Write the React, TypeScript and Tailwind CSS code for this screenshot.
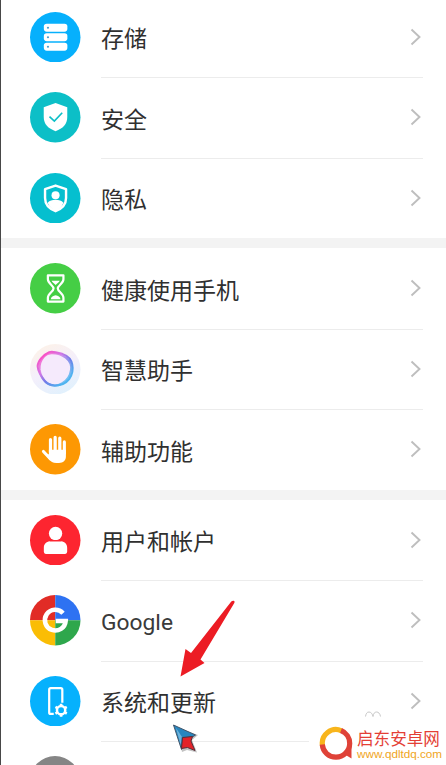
import type { ReactNode } from "react";

const StorageIcon = () => (
  <>
    <circle cx="25" cy="25" r="25" fill="#06b0fc" />
    {[11.6, 21, 30.4].map((y) => (
      <g key={y}>
        <rect x="13.700" y={y} width="23.300" height="7.900" rx="2.8" fill="#fff" />
        <circle cx="17.800" cy={y + 4} r="1.1" fill="#4a9fd0" />
      </g>
    ))}
  </>
);

const SecurityIcon = () => (
  <>
    <circle cx="25" cy="25" r="25" fill="#0cbfc7" />
    <path d="M25.3 11 36.900 15.200v9.300c0 7.500-4.300 11.600-11.600 14.300C18 36.100 13.600 32 13.600 24.500v-9.300z" fill="#fff" />
    <path d="m19.300 24.300 4.800 4.500 7.800-8.300" fill="none" stroke="#0cbfc7" strokeWidth="1.600" />
  </>
);

const PrivacyIcon = () => (
  <>
    <circle cx="25" cy="25" r="25" fill="#05bfcf" />
    <path
      d="M25.300 12.400 35.700 16v8.800c0 6.800-4 10.600-10.400 13C19 35.400 14.900 31.600 14.900 24.800V16z"
      fill="none"
      stroke="#fff"
      strokeWidth="2.400"
      strokeLinejoin="round"
    />
    <circle cx="25.300" cy="22" r="4" fill="#fff" />
    <path d="M17.500 29.500c2-2.300 4.300-3 7.800-3s5.800.7 7.800 3c-1.500 3.800-4 6.300-7.800 8.300-3.800-2-6.300-4.500-7.800-8.300z" fill="#fff" />
  </>
);

const HealthIcon = () => (
  <>
    <circle cx="25" cy="25" r="25" fill="#45ce45" />
    <path
      d="M17.700 12.200h15.400v3.800c0 4.200-5.600 6.300-5.600 9.200s5.600 5 5.600 9.200v3.800H17.700v-3.800c0-4.200 5.600-6.300 5.600-9.200s-5.600-5-5.600-9.200z"
      fill="none"
      stroke="#fff"
      strokeWidth="2.200"
      strokeLinejoin="round"
    />
    <path d="M21.300 17.500h8.200c-.9 1.700-2.900 3-4.100 4.300-1.200-1.300-3.200-2.600-4.100-4.300zM20.600 35.800c.4-2.300 2.400-3.100 4.800-3.800 2.400.7 4.400 1.500 4.800 3.800z" fill="#fff" />
  </>
);

const AssistantIcon = () => (
  <>
    <defs>
      <linearGradient id="halo" x1="0.200" y1="0" x2="0.700" y2="1">
        <stop offset="0" stopColor="#fdf2e8" />
        <stop offset="0.500" stopColor="#f4effb" />
        <stop offset="1" stopColor="#e0f1fd" />
      </linearGradient>
      <linearGradient id="ring" x1="0.100" y1="0.100" x2="0.800" y2="0.850">
        <stop offset="0" stopColor="#fb4fc4" />
        <stop offset="0.350" stopColor="#cf76e6" />
        <stop offset="0.620" stopColor="#717be8" />
        <stop offset="1" stopColor="#4eb4f0" />
      </linearGradient>
    </defs>
    <circle cx="25" cy="25" r="25" fill="url(#halo)" />
    <path
      d="M19 8c3.500-1.400 8.500.5 13.500 2 5.500 2 8.300 5 9.300 10 1.200 5.500 0 10.500-3 14.800-3.500 4.500-8.500 6.400-14.500 6.200-5-.2-8.700-2.300-11.200-6.200C10.500 31 8 27 7.600 22.500 7.300 17 13 10.500 19 8z"
      fill="#f5eafc"
      stroke="url(#ring)"
      strokeWidth="2"
    />
    <path
      d="M21 9c5.500-.3 10.500 1.400 14.500 4.400 4.500 3.500 6 7 5.200 12.300-.8 6-4 10.700-9 13.500-5 2.700-10.700 2.300-14.700-.5-4.500-3.400-7-8-7.600-13.500C9 19.500 11 15.500 14 12.200 16 10 18.500 9 21 9z"
      fill="none"
      stroke="url(#ring)"
      strokeWidth="2.200"
      opacity="0.800"
    />
  </>
);

const AccessibilityIcon = () => (
  <>
    <circle cx="25" cy="25" r="25" fill="#fd9803" />
    <g stroke="#fff" strokeLinecap="round" fill="none">
      <path d="M20.300 28V15.500M24.900 27V13.300M29.500 27V14" strokeWidth="3.200" />
      <path d="M34 29V17.700" strokeWidth="3.100" />
      <path d="m13.300 27.200 6.700 7.300" strokeWidth="3" />
    </g>
    <path d="M18.700 25.500h16.850v6.800c0 3.900-2.700 6.400-6.850 6.400h-2.500c-3.700 0-5.600-1.300-7.500-3.700l-3-6 3 1.200z" fill="#fff" />
  </>
);

const UserIcon = () => (
  <>
    <circle cx="25" cy="25" r="25" fill="#fd2530" />
    <circle cx="25.300" cy="18.300" r="6.600" fill="#fff" />
    <path d="M13.700 36.500v-4c0-4 2.800-6.500 6.800-6.500h9.500c4 0 6.800 2.500 6.800 6.500v4a2 2 0 0 1-2 2h-19a2 2 0 0 1-2.100-2z" fill="#fff" />
    <path d="M19.500 25.400h11.600" stroke="#fd2530" strokeWidth="1.300" />
  </>
);

const GoogleIcon = () => (
  <>
    <path d="M25 25V0A25 25 0 0 0 0 25z" fill="#e12c26" />
    <path d="M25 25h25A25 25 0 0 0 25 0z" fill="#2e72f2" />
    <path d="M25 25H0a25 25 0 0 0 25 25z" fill="#fabd05" />
    <path d="M25 25v25a25 25 0 0 0 25-25z" fill="#2ea74c" />
    <path d="M32.700 18A10.300 10.300 0 1 0 35.300 25.700H25.500" fill="none" stroke="#fff" strokeWidth="4.500" />
  </>
);

const SystemIcon = () => (
  <>
    <circle cx="25" cy="25" r="25" fill="#06b1fd" />
    <path d="M23.500 37.600h-3a1.500 1.500 0 0 1-1.500-1.500V13.600c0-.8.700-1.500 1.500-1.500h10c.8 0 1.500.7 1.500 1.500v13" fill="none" stroke="#fff" strokeWidth="2.200" />
    <circle cx="30.800" cy="33.900" r="4.100" fill="#06b1fd" stroke="#fff" strokeWidth="2.500" />
    <g stroke="#fff" strokeWidth="2.600">
      <path d="M30.800 29.500v-2.100M30.800 38.300v2.100M34.600 31.700l1.800-1.050M34.600 36.100l1.800 1.050M27 31.700l-1.800-1.050M27 36.100l-1.800 1.050" />
    </g>
  </>
);

const Badge = ({ children }: { children: ReactNode }) => (
  <svg viewBox="0 0 50 50" className="size-[50.5px] shrink-0">
    {children}
  </svg>
);

type Item = { label: string; icon: ReactNode; latin?: boolean };

const groups: Item[][] = [
  [
    { label: "存储", icon: <StorageIcon /> },
    { label: "安全", icon: <SecurityIcon /> },
    { label: "隐私", icon: <PrivacyIcon /> },
  ],
  [
    { label: "健康使用手机", icon: <HealthIcon /> },
    { label: "智慧助手", icon: <AssistantIcon /> },
    { label: "辅助功能", icon: <AccessibilityIcon /> },
  ],
  [
    { label: "用户和帐户", icon: <UserIcon /> },
    { label: "Google", icon: <GoogleIcon />, latin: true },
    { label: "系统和更新", icon: <SystemIcon /> },
  ],
];

function Row({ item, divider }: { item: Item; divider: boolean }) {
  return (
    <div className="flex h-[80.5px] shrink-0 items-stretch pl-[29px] pr-[23px]">
      <div className="flex items-center">
        <Badge>{item.icon}</Badge>
      </div>
      <div className={`-mb-px ml-5 flex flex-1 items-center justify-between border-b ${divider ? "border-[#ececec]" : "border-transparent"}`}>
        <span
          className={
            item.latin
              ? "pl-[0.5px] pt-[5px] font-[Roboto,sans-serif] text-[22.8px] leading-none text-[#3a3a3a]"
              : "pl-[0.5px] pt-px text-[23px] leading-none text-[#303030]"
          }
        >
          {item.label}
        </span>
        <svg viewBox="0 0 12 18" className="mb-px mr-[1.5px] h-[18px] w-3" fill="none" stroke="#bebebe" strokeWidth="1.900">
          <path d="m1.500 1.500 8 7.500-8 7.500" />
        </svg>
      </div>
    </div>
  );
}

function Arrow() {
  return (
    <svg viewBox="0 0 60 80" className="absolute left-[176px] top-[598px] h-20 w-[60px]">
      <path d="M56.500 2.800c1.200.3 1.300 1.200.8 2.200L23.500 61.500l4 3.500L3.500 78.500 8.500 51l5.500 4L53.500 4.500c.8-1 1.800-2 3-1.700z" fill="#ec1c24" />
    </svg>
  );
}

function Pointer() {
  return (
    <svg viewBox="0 0 28 32" className="absolute left-[171px] top-[723px] h-8 w-7">
      <path d="M4 4 26 12 20 17 25 29.500 15 27 10 29z" fill="#777" opacity="0.450" />
      <path d="M1.500 2 23.500 12 19.500 14.500 11 15 9.500 26.500z" fill="#2786bf" stroke="#42556a" strokeWidth="1" />
      <path d="M4 5 8.700 22l1-8.500z" fill="#6db3dc" />
      <path d="m10.500 14.500 10-1-1.500 4.500 4 9.500-7.500-3-6 1z" fill="#e32329" stroke="#552f39" strokeWidth="1" />
    </svg>
  );
}

function SiteMark() {
  return (
    <div className="absolute left-[308px] top-[723px] flex h-[42px] w-[138px] items-start bg-white">
      <svg viewBox="0 0 34 36" className="ml-[10px] mt-[3px] h-9 w-[34px] shrink-0" fill="none" strokeWidth="5.200">
        <path d="M22.500 4.800a13.600 13.600 0 0 0-19 14.700" stroke="#f8b51c" />
        <path d="M3.300 18.500A13.700 13.700 0 0 0 17 31.200a14 14 0 0 0 13.700-13.700A13.700 13.700 0 0 0 22 4.500" stroke="#df4238" />
        <path d="m25 28 7.500-8v12.500z" fill="#df4238" />
      </svg>
      <div className="ml-1 mt-[7px] flex flex-col whitespace-nowrap">
        <span className="text-[16.600px] leading-[17px] text-[#e43f36]">启东安卓网</span>
        <span className="font-['Liberation_Sans',sans-serif] text-[11.700px] leading-[13px] text-[#f0a51d]">www.qdltdq.com</span>
      </div>
    </div>
  );
}

export default function App() {
  return (
    <main className="relative h-[765px] w-[446px] overflow-hidden border-l border-[#484848] bg-white font-['Noto_Sans_CJK_SC',sans-serif]">
      <div className="-mt-[3.2px] flex flex-col">
        {groups.map((group, i) => (
          <section key={i} className={i > 0 ? "border-t-10 border-[#f3f3f3]" : ""}>
            {group.map((item, j) => (
              <Row key={item.label} item={item} divider={j < 2 || i === 2} />
            ))}
          </section>
        ))}
        <div className="pl-[29px] pt-[15px]">
          <div className="size-[50px] rounded-full bg-[#858585]" />
        </div>
      </div>
      <Arrow />
      <Pointer />
      <svg viewBox="0 0 18 8" className="absolute left-[363px] top-[710px] h-2 w-[18px]" fill="none" stroke="#c8c8c8">
        <path d="M1.500 6.500C2 3.500 3 2 5 2s3.500 2 4 4.500C9.500 3.500 10.500 2 12.500 2s3.500 1.500 4 4.500" />
      </svg>
      <SiteMark />
    </main>
  );
}
